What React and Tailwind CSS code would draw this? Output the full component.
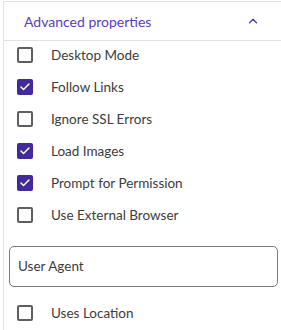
import { ChevronUp, Check } from "lucide-react";

const items = [
  { label: "Desktop Mode", checked: false },
  { label: "Follow Links", checked: true },
  { label: "Ignore SSL Errors", checked: false },
  { label: "Load Images", checked: true },
  { label: "Prompt for Permission", checked: true },
  { label: "Use External Browser", checked: false },
];

function Box({ checked }) {
  return checked ? (
    <span className="flex h-4 w-4 items-center justify-center rounded-[2px] bg-[#4527a0]">
      <Check size={12} strokeWidth={3} className="text-white" />
    </span>
  ) : (
    <span className="h-4 w-4 rounded-[2px] border-2 border-[#5f5f5f]" />
  );
}

function Row({ label, checked }) {
  return (
    <div className="flex h-8 items-center pl-[13px]">
      <Box checked={checked} />
      <span className="ml-[18px] text-[13.5px] text-[#3c3c3c]">{label}</span>
    </div>
  );
}

export default function App() {
  return (
    <div className="h-[330px] w-[281px] overflow-hidden bg-white pt-px pl-[3px]" style={{ fontFamily: "Lato, 'Noto Sans', sans-serif" }}>
      <div className="h-full border-l border-t border-[#e2e2e2]">
        <div className="flex h-[39px] items-center justify-between border-b border-[#e2e2e2] pl-5 pr-[21px]">
          <span className="text-[14px] text-[#5b3cc4]">Advanced properties</span>
          <ChevronUp size={14} strokeWidth={2.5} className="text-[#5b3cc4]" />
        </div>
        <div className="-mt-[2px]">
          {items.map((it) => (
            <Row key={it.label} {...it} />
          ))}
        </div>
        <div className="mt-[15px] ml-[5px] mr-[3px] flex h-[41px] items-center rounded-[5px] border border-[#7a7a7a] px-2">
          <span className="text-[13.5px] text-[#3c3c3c]">User Agent</span>
        </div>
        <div className="mt-[10px]">
          <Row label="Uses Location" checked={false} />
        </div>
      </div>
    </div>
  );
}
